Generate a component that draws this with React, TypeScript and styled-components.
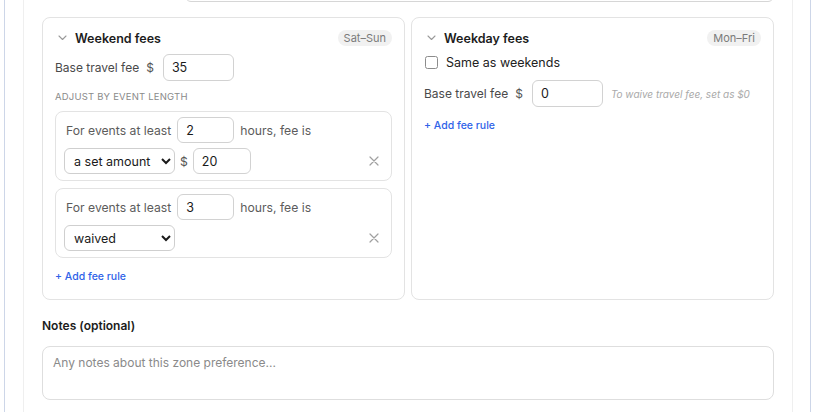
import styled, { createGlobalStyle } from 'styled-components';

const GlobalStyle = createGlobalStyle`
    html, body {
        margin: 0;
        padding: 0;
        background: #ffffff;
        font-family: Inter, "Noto Sans", sans-serif;
        color: #1f1f1f;
    }
    * { box-sizing: border-box; }
`;

const Viewport = styled.div`
    height: 412px;
    overflow: hidden;
`;

const Shell = styled.div`
    margin-left: 4px;
    width: 807px;
    min-height: 460px;
    border-left: 1px solid #cdd6e8;
    border-right: 1px solid #cdd6e8;
    padding: 0 17px 0 18px;
`;

const Card = styled.div`
    border-left: 1px solid #efefef;
    border-right: 1px solid #efefef;
    padding: 0 18px 18px 18px;
    margin-top: -28px;
    display: flex;
    flex-direction: column;
`;

const ZoneRow = styled.div`
    display: flex;
    align-items: center;
    height: 30px;
`;

const ZoneSpacer = styled.div`
    width: 143px;
`;

const ZoneInput = styled.input`
    flex: 1;
    height: 30px;
    border: 1px solid #d6d6d6;
    border-radius: 6px;
    font: inherit;
`;

const Panels = styled.div`
    display: grid;
    grid-template-columns: 1fr 1fr;
    gap: 6px;
    margin-top: 15px;
`;

const Panel = styled.section`
    border: 1px solid #e3e3e3;
    border-radius: 8px;
    padding: 12px 12px 15px 12px;
    display: flex;
    flex-direction: column;
`;

const PanelHeader = styled.div`
    display: flex;
    align-items: center;
    height: 16px;
    margin-bottom: 8px;
`;

const Chevron = styled.svg`
    width: 9px;
    height: 6px;
    margin: 0 8px 0 3px;
    flex: none;
`;

const Title = styled.h3`
    margin: 0;
    font-size: 12.5px;
    font-weight: 600;
    color: #1c1c1c;
    flex: 1;
`;

const Badge = styled.span`
    background: #f1f1f1;
    color: #7a7a7a;
    font-size: 11px;
    height: 16px;
    line-height: 16px;
    padding: 0 6px;
    border-radius: 8px;
`;

const FieldRow = styled.div`
    display: flex;
    align-items: center;
    font-size: 12px;
    color: #4a4a4a;
    white-space: nowrap;
`;

const Dollar = styled.span<{ $gap?: number }>`
    margin: 0 ${(p) => p.$gap ?? 9}px 0 ${(p) => p.$gap ?? 7}px;
    color: #555;
`;

const NumberInput = styled.input<{ $w: number; $h?: number }>`
    width: ${(p) => p.$w}px;
    height: ${(p) => p.$h ?? 26}px;
    border: 1px solid #d2d2d2;
    border-radius: 6px;
    padding: 0 8px;
    font-family: inherit;
    font-size: 12.5px;
    color: #1a1a1a;
    outline: none;
    flex: none;
`;

const SectionCaption = styled.div`
    margin: 10px 0 9px 0;
    font-size: 9.5px;
    letter-spacing: 0.2px;
    text-transform: uppercase;
    color: #8a8a8a;
`;

const Rules = styled.div`
    display: flex;
    flex-direction: column;
    gap: 7px;
`;

const RuleBox = styled.div`
    border: 1px solid #e3e3e3;
    border-radius: 8px;
    padding: 5px 12px 6px 8px;
    display: flex;
    flex-direction: column;
    gap: 5px;
`;

const RuleLine = styled.div`
    display: flex;
    align-items: center;
    font-size: 12.2px;
    color: #5c5c5c;
    white-space: nowrap;
`;

const RuleText = styled.span<{ $left?: number }>`
    margin: 0 6px 0 ${(p) => p.$left ?? 2}px;
`;

const FeeSelect = styled.select`
    width: 111px;
    height: 26px;
    border: 1px solid #cfcfcf;
    border-radius: 6px;
    padding: 0 2px 0 5px;
    font-family: inherit;
    font-size: 12.5px;
    color: #1a1a1a;
    background: #fff;
`;

const Remove = styled.button`
    margin-left: auto;
    border: 0;
    background: none;
    padding: 0;
    width: 10px;
    height: 10px;
    display: flex;
    cursor: pointer;
`;

const AddLink = styled.a<{ $top: number }>`
    margin-top: ${(p) => p.$top}px;
    font-size: 10.5px;
    line-height: 14px;
    font-weight: 500;
    color: #2f63e8;
    text-decoration: none;
    cursor: pointer;
`;

const CheckRow = styled.label`
    display: flex;
    align-items: center;
    height: 17px;
    font-size: 12.5px;
    color: #222;
    margin-bottom: 9px;
`;

const Check = styled.input`
    appearance: none;
    width: 13px;
    height: 13px;
    margin: 0 8px 0 1px;
    border: 1px solid #8c8c8c;
    border-radius: 2.5px;
    background: #fff;
`;

const Hint = styled.span`
    margin-left: 8px;
    font-size: 10px;
    font-style: italic;
    color: #a9a9a9;
`;

const NotesLabel = styled.label`
    margin-top: 18px;
    font-size: 12px;
    line-height: 15px;
    font-weight: 600;
    color: #1c1c1c;
`;

const NotesArea = styled.textarea`
    margin-top: 13px;
    flex: none;
    height: 54px;
    border: 1px solid #dedede;
    border-radius: 8px;
    padding: 8px 10px;
    font-family: inherit;
    font-size: 12px;
    resize: none;
    &::placeholder { color: #8a8a8a; }
`;

function ChevronDown() {
    return (
        <Chevron viewBox="0 0 9 6">
            <path d="M1 1l3.5 3.5L8 1" fill="none" stroke="#9a9a9a" strokeWidth="1.1" strokeLinecap="round" strokeLinejoin="round" />
        </Chevron>
    );
}

function RemoveButton() {
    return (
        <Remove aria-label="Remove rule">
            <svg width="10" height="10" viewBox="0 0 10 10">
                <path d="M1 1l8 8M9 1l-8 8" stroke="#a0a0a0" strokeWidth="1.2" strokeLinecap="round" />
            </svg>
        </Remove>
    );
}

function Rule(props: { hours: string; mode: string; amount?: string }) {
    return (
        <RuleBox>
            <RuleLine>
                <RuleText>For events at least</RuleText>
                <NumberInput $w={57} defaultValue={props.hours} />
                <RuleText $left={6}>hours, fee is</RuleText>
            </RuleLine>
            <RuleLine>
                <FeeSelect defaultValue={props.mode}>
                    <option value="set">a set amount</option>
                    <option value="waived">waived</option>
                </FeeSelect>
                {props.amount !== undefined && (
                    <>
                        <Dollar $gap={5}>$</Dollar>
                        <NumberInput $w={58} defaultValue={props.amount} />
                    </>
                )}
                <RemoveButton />
            </RuleLine>
        </RuleBox>
    );
}

export default function App() {
    return (
        <Viewport>
            <GlobalStyle />
            <Shell>
                <Card>
                    <ZoneRow>
                        <ZoneSpacer />
                        <ZoneInput aria-label="Zone" />
                    </ZoneRow>
                    <Panels>
                        <Panel>
                            <PanelHeader>
                                <ChevronDown />
                                <Title>Weekend fees</Title>
                                <Badge>Sat–Sun</Badge>
                            </PanelHeader>
                            <FieldRow>
                                Base travel fee
                                <Dollar>$</Dollar>
                                <NumberInput $w={71} $h={27} defaultValue="35" />
                            </FieldRow>
                            <SectionCaption>Adjust by event length</SectionCaption>
                            <Rules>
                                <Rule hours="2" mode="set" amount="20" />
                                <Rule hours="3" mode="waived" />
                            </Rules>
                            <AddLink $top={12}>+ Add fee rule</AddLink>
                        </Panel>
                        <Panel>
                            <PanelHeader>
                                <ChevronDown />
                                <Title>Weekday fees</Title>
                                <Badge>Mon–Fri</Badge>
                            </PanelHeader>
                            <CheckRow>
                                <Check type="checkbox" />
                                Same as weekends
                            </CheckRow>
                            <FieldRow>
                                Base travel fee
                                <Dollar>$</Dollar>
                                <NumberInput $w={71} $h={27} defaultValue="0" />
                                <Hint>To waive travel fee, set as $0</Hint>
                            </FieldRow>
                            <AddLink $top={12}>+ Add fee rule</AddLink>
                        </Panel>
                    </Panels>
                    <NotesLabel>Notes (optional)</NotesLabel>
                    <NotesArea placeholder="Any notes about this zone preference..." />
                </Card>
            </Shell>
        </Viewport>
    );
}
